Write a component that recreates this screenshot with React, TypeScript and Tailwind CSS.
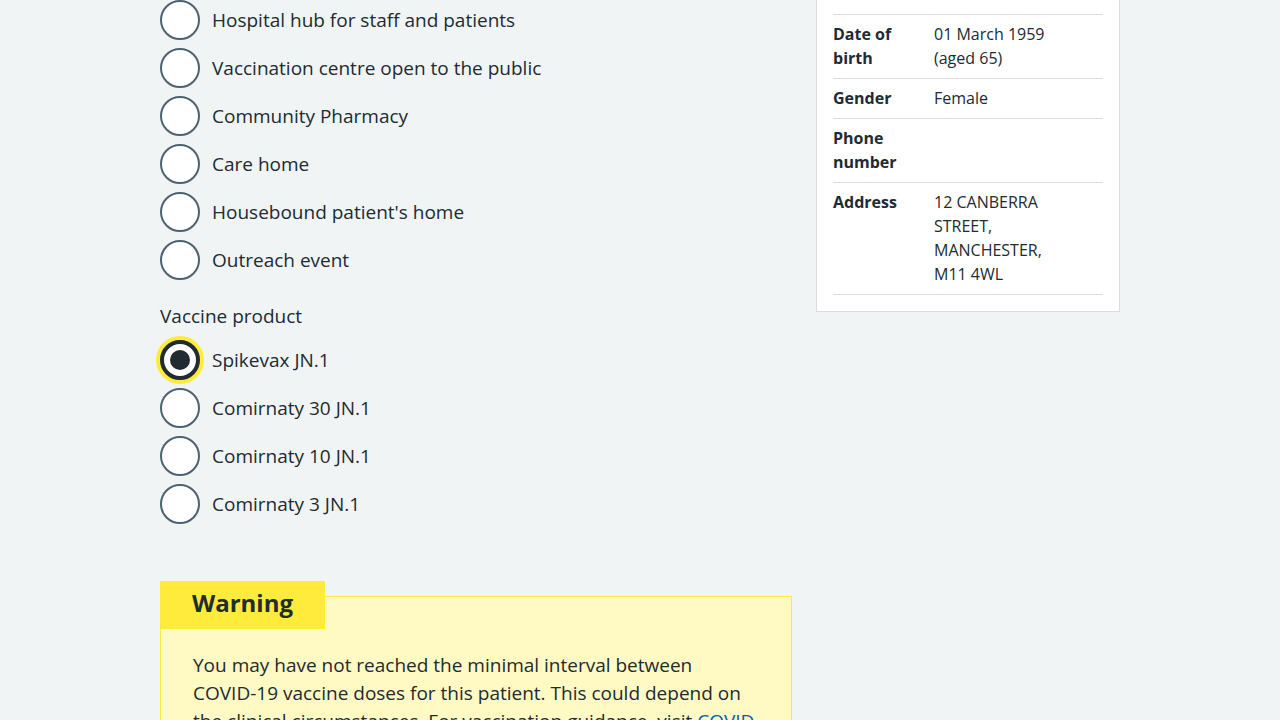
import React from "react";

interface RadioOption {
  id: string;
  label: string;
  checked?: boolean;
}

const locations: RadioOption[] = [
  { id: "hospital-hub", label: "Hospital hub for staff and patients" },
  { id: "vaccination-centre", label: "Vaccination centre open to the public" },
  { id: "pharmacy", label: "Community Pharmacy" },
  { id: "care-home", label: "Care home" },
  { id: "housebound", label: "Housebound patient's home" },
  { id: "outreach", label: "Outreach event" },
];

const products: RadioOption[] = [
  { id: "spikevax", label: "Spikevax JN.1", checked: true },
  { id: "comirnaty-30", label: "Comirnaty 30 JN.1" },
  { id: "comirnaty-10", label: "Comirnaty 10 JN.1" },
  { id: "comirnaty-3", label: "Comirnaty 3 JN.1" },
];

const patientDetails = [
  { key: "Date of birth", value: "01 March 1959 (aged 65)" },
  { key: "Gender", value: "Female" },
  { key: "Phone number", value: "" },
  { key: "Address", value: "12 CANBERRA STREET, MANCHESTER, M11 4WL" },
];

function Radio({ option }: { option: RadioOption }) {
  return (
    <label className="flex h-10 items-center gap-3">
      {option.checked ? (
        <span className="flex h-10 w-10 shrink-0 items-center justify-center rounded-full border-4 border-[#212b32] bg-white shadow-[0_0_0_4px_#ffeb3b]">
          <span className="h-5 w-5 rounded-full bg-[#212b32]" />
        </span>
      ) : (
        <span className="h-10 w-10 shrink-0 rounded-full border-2 border-[#4c6272] bg-white" />
      )}
      <span className="text-[19px] leading-7">{option.label}</span>
    </label>
  );
}

export default function App() {
  return (
    <div className="min-h-screen overflow-hidden bg-[#f0f4f5] font-['Open_Sans','Liberation_Sans',Arial,sans-serif] text-[#212b32]">
      <div className="mx-auto flex w-[960px] items-start gap-6">
        {/* left column: the vaccination form */}
        <div className="w-[632px] shrink-0">
          <div className="flex flex-col gap-2">
            {locations.map((option) => (
              <Radio key={option.id} option={option} />
            ))}
          </div>

          <fieldset className="mt-6">
            <legend className="mb-3 text-[19px] leading-6">Vaccine product</legend>
            <div className="flex flex-col gap-2">
              {products.map((option) => (
                <Radio key={option.id} option={option} />
              ))}
            </div>
          </fieldset>

          <div className="mt-[72px] border border-[#ffeb3b] bg-[#fff9c4] pl-8 pr-6 pb-8">
            <h3 className="-ml-[33px] -mt-4 block w-fit bg-[#ffeb3b] px-8 pt-[6px] pb-[10px] text-2xl font-bold leading-8">
              Warning
            </h3>
            <p className="mt-[22px] text-[19px] leading-7">
              You may have not reached the minimal interval between{" "}
              <span className="whitespace-nowrap">COVID-19</span> vaccine doses
              for this patient. This could depend on the clinical
              circumstances. For vaccination guidance, visit{" "}
              <a href="#" className="text-[#005eb8] underline">
                COVID-19 vaccination guidance
              </a>
              .
            </p>
          </div>
        </div>

        {/* right column: patient summary card */}
        <div className="-mt-[3px] w-[304px] shrink-0 border border-[#d8dde0] bg-white p-4">
          <dl className="border-b border-[#d8dde0] text-base leading-6">
            {patientDetails.map((row) => (
              <div
                key={row.key}
                className="grid grid-cols-[101px_135px] border-t border-[#d8dde0] pt-[7px] pb-2"
              >
                <dt className="pr-5 font-bold">{row.key}</dt>
                <dd>{row.value}</dd>
              </div>
            ))}
          </dl>
        </div>
      </div>
    </div>
  );
}
